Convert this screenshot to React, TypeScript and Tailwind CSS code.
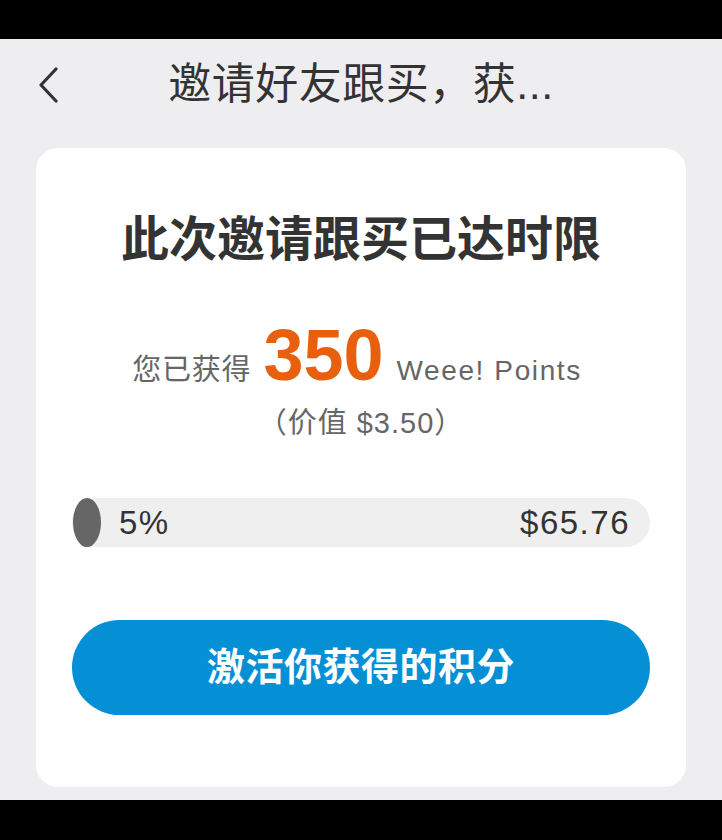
import React from "react";

const FONT = { fontFamily: '"Liberation Sans", "Noto Sans CJK SC", sans-serif' };

export default function App() {
  return (
    <div className="w-[722px] h-[840px] flex flex-col bg-black" style={FONT}>
      <div className="h-[39px] shrink-0 bg-black" />
      <div className="h-[761px] shrink-0 bg-[#eeeef1] flex flex-col">
        <div className="relative h-[90px] shrink-0 flex items-center justify-center">
          <svg
            className="absolute left-[37px] top-[28px]"
            width="22"
            height="36"
            viewBox="0 0 22 36"
            fill="none"
          >
            <polyline
              points="19,2 4,18 19,34"
              stroke="#333333"
              strokeWidth="3.2"
              strokeLinecap="round"
              strokeLinejoin="round"
            />
          </svg>
          <div className="text-[43px] leading-none tracking-[0.5px] text-[#333333]">邀请好友跟买，获...</div>
        </div>
        <div className="mt-[19px] mx-[36px] h-[639px] bg-white rounded-[22px] px-[36px] pt-[63px] flex flex-col items-center">
          <div className="text-[48px] leading-[58px] font-bold text-[#333333]">此次邀请跟买已达时限</div>
          <div className="mt-[50px] mr-[8px] h-[72px] flex items-baseline justify-center">
            <span className="text-[29px] tracking-[0.8px] text-[#666666]">您已获得</span>
            <span className="text-[72px] leading-[72px] font-bold text-[#e8600e] ml-[12px] mr-[13px]">350</span>
            <span className="text-[28px] tracking-[1.6px] text-[#666666]">Weee! Points</span>
          </div>
          <div className="mt-[14px] h-[36px] text-[29px] leading-[36px] tracking-[1px] text-[#666666]">（价值 $3.50）</div>
          <div className="mt-[57px] w-full h-[49px] rounded-full bg-[#efeff0] flex items-center relative">
            <div className="absolute left-[1px] top-0 w-[28px] h-[49px] rounded-[50%] bg-[#666666]" />
            <div className="pl-[47px] pr-[20px] flex-1 flex items-center justify-between text-[33px] tracking-[1.5px] text-[#333333]">
              <span>5%</span>
              <span>$65.76</span>
            </div>
          </div>
          <button className="mt-[73px] w-full h-[95px] rounded-full bg-[#058fd5] text-white text-[38px] tracking-[0.5px] font-bold flex items-center justify-center">
            激活你获得的积分
          </button>
        </div>
      </div>
      <div className="h-[40px] shrink-0 bg-black" />
    </div>
  );
}
